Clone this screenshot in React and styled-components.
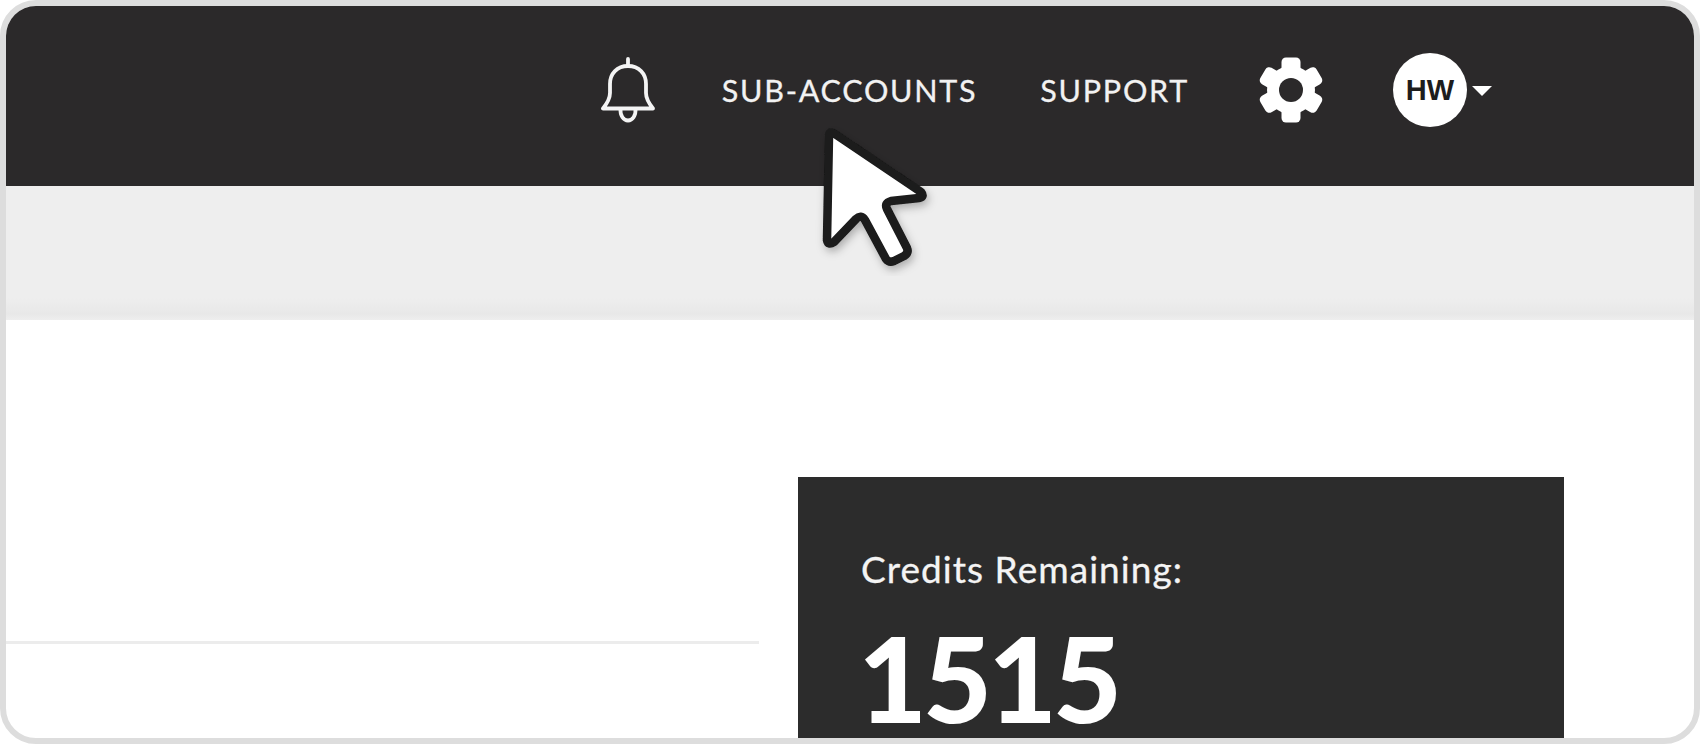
import React from 'react';
import styled, { createGlobalStyle } from 'styled-components';

const GlobalStyle = createGlobalStyle`
  html, body {
    margin: 0;
    padding: 0;
    background: #ffffff;
  }
  * {
    box-sizing: border-box;
  }
`;

const BellIcon = () => (
  <svg width="54" height="66" viewBox="0 0 54 66" fill="none" stroke="#f4f4f4" strokeWidth="3.8" strokeLinecap="round" strokeLinejoin="round">
    <path d="M27 2v7" />
    <path d="M27 9c-11 0-18 7.500-18 18v9c0 6-3 10.500-7 15.500h50c-4-5-7-9.500-7-15.500v-9c0-10.500-7-18-18-18z" />
    <path d="M19.500 52c-.5 6.500 3 11.500 7.500 11.500s8-5 7.500-11.500" />
  </svg>
);

const GearIcon = () => (
  <svg width="64" height="66" viewBox="0 0 64 66">
    <circle cx="32" cy="33" r="24" fill="#ffffff" />
    {[0, 60, 120].map((angle) => (
      <rect key={angle} x="22.500" y="0.500" width="19" height="65" rx="4.500" fill="#ffffff" transform={`rotate(${angle} 32 33)`} />
    ))}
    <circle cx="32" cy="33" r="12" fill="#2b292a" />
  </svg>
);

const CursorIcon = () => (
  <svg width="124" height="156" viewBox="0 0 124 156">
    <defs>
      <filter id="cursorShadow" x="-20%" y="-20%" width="140%" height="140%">
        <feDropShadow dx="2" dy="4" stdDeviation="4" floodColor="#000000" floodOpacity="0.28" />
      </filter>
    </defs>
    <path
      d="M14 16Q14 10 20 14L106 72Q110 77 104 78L76 81Q69 83 72 89L92 128Q94 133 89 136L79 141Q74 143 71 139L50 100Q46 94 41 99L19 122Q13 126 12 120Z"
      fill="#ffffff"
      stroke="#1a1a1a"
      strokeWidth="8.500"
      strokeLinejoin="round"
      filter="url(#cursorShadow)"
    />
  </svg>
);

const App = () => (
  <>
    <GlobalStyle />
    <Frame>
      <TopBar>
        <BellIcon />
        <NavLink $gap={67}>SUB-ACCOUNTS</NavLink>
        <NavLink $gap={63}>SUPPORT</NavLink>
        <GearButton>
          <GearIcon />
        </GearButton>
        <Avatar>HW</Avatar>
        <Caret />
      </TopBar>
      <SubBar />
      <Content>
        <LeftColumn>
          <Divider />
        </LeftColumn>
        <CreditsCard>
          <CreditsLabel>Credits Remaining:</CreditsLabel>
          <CreditsValue>1515</CreditsValue>
        </CreditsCard>
      </Content>
      <CursorWrap>
        <CursorIcon />
      </CursorWrap>
    </Frame>
  </>
);

const Frame = styled.div`
  position: relative;
  width: 1700px;
  height: 744px;
  border: 6px solid #dddddd;
  border-radius: 36px;
  overflow: hidden;
  background: #ffffff;
  font-family: Lato, "Open Sans", sans-serif;
`;

const TopBar = styled.header`
  display: flex;
  align-items: center;
  justify-content: flex-end;
  height: 180px;
  padding: 0 202px 12px 0;
  background: #2b292a;
`;

const NavLink = styled.a`
  margin-left: ${(props) => props.$gap}px;
  color: #f2f2f2;
  font-size: 30.500px;
  letter-spacing: 1.750px;
  line-height: 36px;
  white-space: nowrap;
  -webkit-text-stroke: 0.3px #f2f2f2;
`;

const GearButton = styled.div`
  display: flex;
  margin-left: 70px;
`;

const Avatar = styled.div`
  display: flex;
  align-items: center;
  justify-content: center;
  width: 74px;
  height: 74px;
  margin-left: 70px;
  border-radius: 50%;
  background: #ffffff;
  color: #1d1d1d;
  font-family: "Liberation Sans", Arial, sans-serif;
  font-size: 29px;
  font-weight: 700;
`;

const Caret = styled.span`
  width: 0;
  height: 0;
  margin-left: 5px;
  margin-top: 2px;
  border-left: 10px solid transparent;
  border-right: 10px solid transparent;
  border-top: 10px solid #ffffff;
`;

const SubBar = styled.div`
  height: 134px;
  background: linear-gradient(to bottom, #eeeeee 0, #eeeeee 112px, #e8e8e8 128px, #eeeeee 134px);
`;

const Content = styled.main`
  display: flex;
  align-items: flex-start;
  padding-top: 157px;
`;

const LeftColumn = styled.div`
  width: 753px;
  padding-top: 164px;
`;

const Divider = styled.div`
  height: 3px;
  background: #ececec;
`;

const CreditsCard = styled.section`
  width: 766px;
  height: 261px;
  margin-left: 39px;
  padding: 70px 0 0 63px;
  background: #2c2c2c;
  color: #ffffff;
`;

const CreditsLabel = styled.div`
  color: #f4f4f4;
  font-size: 37px;
  letter-spacing: 1.050px;
  line-height: 44px;
  -webkit-text-stroke: 0.3px #f4f4f4;
`;

const CreditsValue = styled.div`
  margin: 26px 0 0 -3px;
  font-size: 119px;
  font-weight: 900;
  letter-spacing: -4px;
  line-height: 120px;
`;

const CursorWrap = styled.div`
  position: absolute;
  left: 809px;
  top: 114px;
  line-height: 0;
`;

export default App;
